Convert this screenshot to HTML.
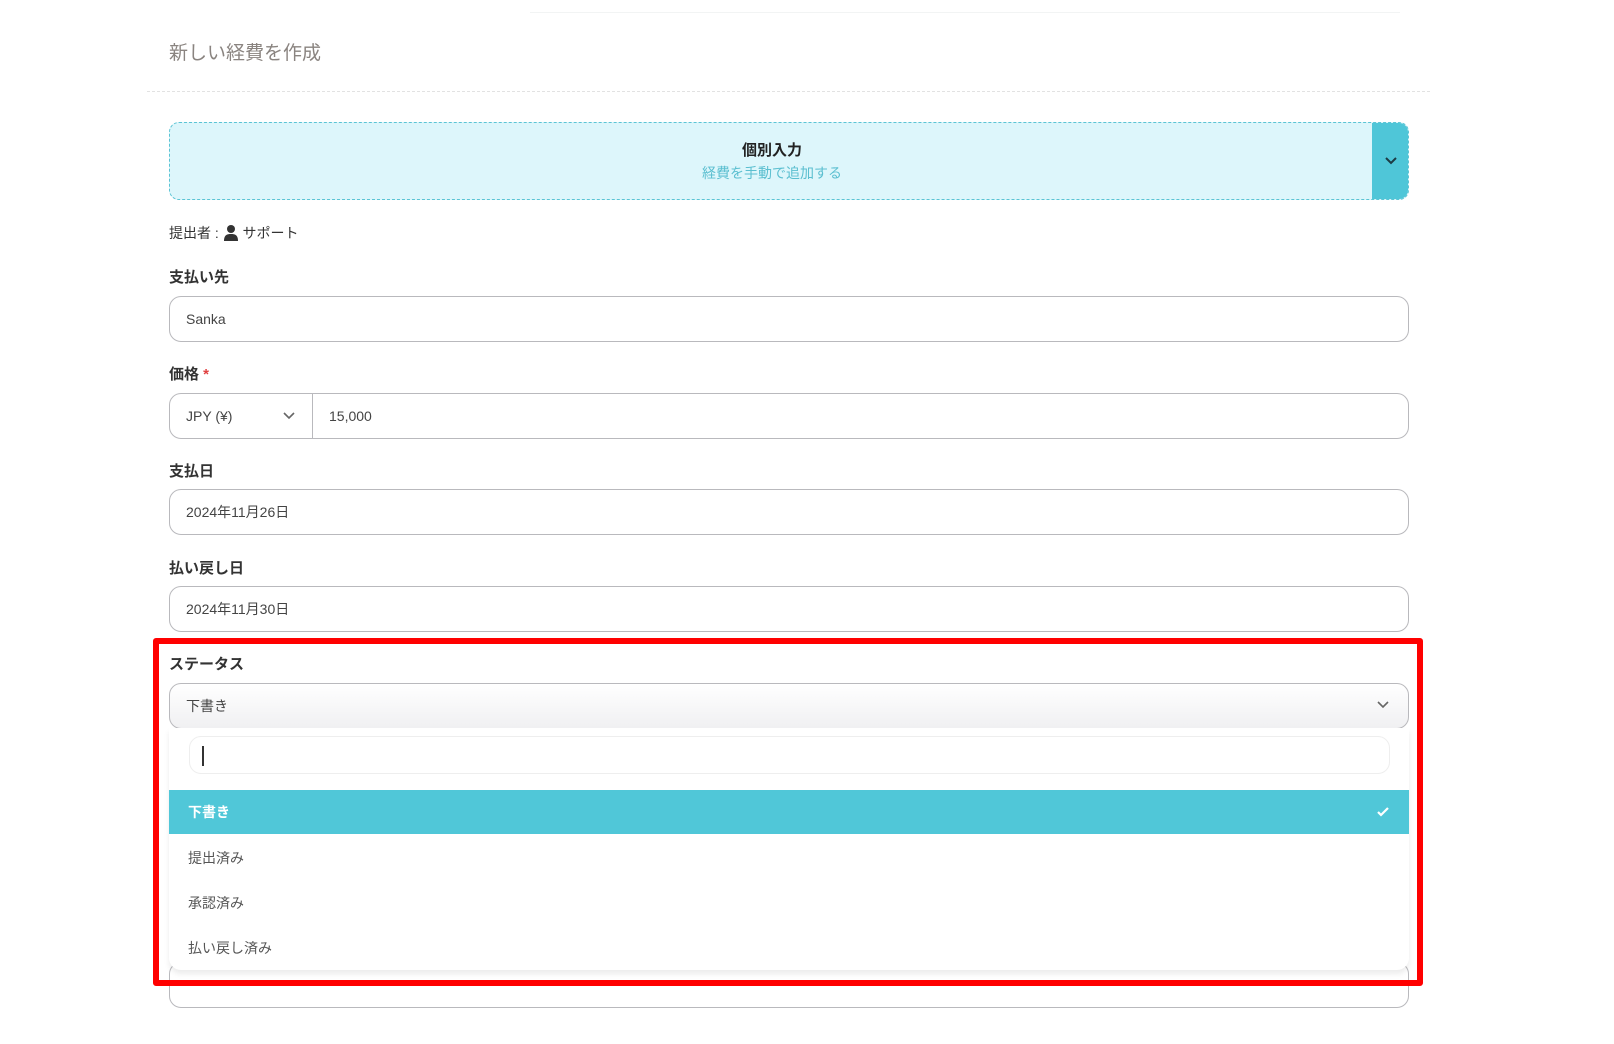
<!DOCTYPE html>
<html><head><meta charset="utf-8"><style>
*{box-sizing:border-box;margin:0;padding:0}
body{width:1614px;height:1044px;background:#fff;font-family:"Liberation Sans","Noto Sans CJK JP",sans-serif;position:relative;overflow:hidden;color:#333}
.a{position:absolute}
.lbl{position:absolute;left:169px;font-size:15px;font-weight:bold;color:#333}
.inp{position:absolute;left:169px;width:1240px;height:46px;border:1px solid #b9b9bd;border-radius:12px;font-size:14px;color:#444;padding-left:16px;line-height:44px;background:#fff}
</style></head><body>
<div class="a" style="left:530px;top:12px;width:870px;height:1px;background:#f2f4f4"></div>
<div class="a" style="left:169px;top:38px;font-size:19px;color:#8a8480">新しい経費を作成</div>
<div class="a" style="left:147px;top:91px;width:1283px;border-top:1px dashed #e2e2e2"></div>
<div class="a" style="left:169px;top:122px;width:1240px;height:78px;background:#ddf6fb;border:1px dashed #5bc4d4;border-radius:10px;overflow:hidden">
 <div class="a" style="right:0;top:0;width:36px;height:78px;background:#4fc6d8"></div>
 <svg class="a" style="right:10px;top:32px" width="14" height="12" viewBox="0 0 14 12"><path d="M2 3l5 5 5-5" fill="none" stroke="#1d3b44" stroke-width="2"/></svg>
 <div class="a" style="left:0;width:1204px;top:16px;text-align:center;font-size:15px;font-weight:bold;color:#222">個別入力</div>
 <div class="a" style="left:0;width:1204px;top:40px;text-align:center;font-size:14px;color:#5bbfd0">経費を手動で追加する</div>
</div>
<div class="a" style="left:169px;top:223px;font-size:14px;color:#333">提出者 : <svg width="16" height="17" viewBox="0 0 16 17" style="vertical-align:-3px"><circle cx="8" cy="5" r="4" fill="#333"/><path d="M1 17c0-6 3-7 7-7s7 1 7 7z" fill="#333"/></svg> サポート</div>
<div class="lbl" style="top:266px">支払い先</div>
<div class="inp" style="top:296px">Sanka</div>
<div class="lbl" style="top:363px">価格 <span style="color:#e04040">*</span></div>
<div class="inp" style="top:393px;padding-left:0">
 <div class="a" style="left:0;top:0;width:143px;height:44px;border-right:1px solid #b9b9bd;padding-left:16px">JPY (¥)</div>
 <svg class="a" style="left:112px;top:17px" width="14" height="10" viewBox="0 0 14 10"><path d="M2 2l5 5 5-5" fill="none" stroke="#666" stroke-width="1.6"/></svg>
 <div class="a" style="left:159px;top:0">15,000</div>
</div>
<div class="lbl" style="top:460px">支払日</div>
<div class="inp" style="top:489px">2024年11月26日</div>
<div class="lbl" style="top:557px">払い戻し日</div>
<div class="inp" style="top:586px">2024年11月30日</div>
<div class="inp" style="top:962px;height:46px"></div>
<div class="lbl" style="top:653px">ステータス</div>
<div class="inp" style="top:683px;background:linear-gradient(#fff,#f0f0f2)">下書き</div>
<svg class="a" style="left:1376px;top:700px" width="14" height="10" viewBox="0 0 14 10"><path d="M2 2l5 5 5-5" fill="none" stroke="#666" stroke-width="1.6"/></svg>
<div class="a" style="left:169px;top:728px;width:1240px;height:242px;background:#fff;border-radius:0 0 12px 12px;box-shadow:0 4px 6px rgba(0,0,0,0.08)"></div>
<div class="a" style="left:189px;top:736px;width:1201px;height:38px;border:1px solid #eee;border-radius:12px"><div class="a" style="left:12px;top:9px;width:2px;height:20px;background:#333"></div></div>
<div class="a" style="left:169px;top:790px;width:1240px;height:44px;background:#50c7d8;color:#fff;font-weight:bold;font-size:14px;line-height:44px;padding-left:19px">下書き</div>
<svg class="a" style="left:1376px;top:806px" width="14" height="12" viewBox="0 0 14 12"><path d="M2 6l3 3 7-7" fill="none" stroke="#fff" stroke-width="2.2"/></svg>
<div class="a" style="left:188px;top:848px;font-size:14px;color:#555">提出済み</div>
<div class="a" style="left:188px;top:893px;font-size:14px;color:#555">承認済み</div>
<div class="a" style="left:188px;top:938px;font-size:14px;color:#555">払い戻し済み</div>
<div class="a" style="left:153px;top:638px;width:1270px;height:348px;border:6px solid #f00;border-radius:3px"></div>
</body></html>
